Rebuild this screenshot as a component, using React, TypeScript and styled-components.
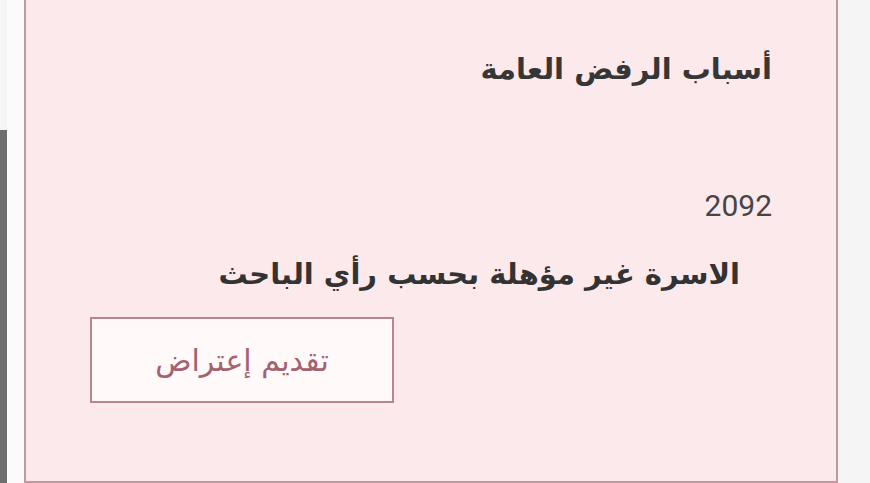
import styled, { createGlobalStyle } from 'styled-components';

const GlobalStyle = createGlobalStyle`
  html, body {
    margin: 0;
    padding: 0;
    background: #f6f5f5;
    overflow: hidden;
  }
`;

const Page = styled.div`
  display: flex;
  height: 483px;
  width: 870px;
  font-family: "DejaVu Sans", "Noto Sans", sans-serif;
`;

const SideRail = styled.div`
  width: 7px;
  margin-top: 130px;
  background: #6e6e6e;
`;

const Gutter = styled.div`
  width: 17px;
  background: #fbfbfb;
`;

const Panel = styled.section`
  width: 810px;
  height: 481px;
  direction: rtl;
  background: #fce9ec;
  border: 2px solid #c2979f;
  border-top: none;
  display: flex;
  flex-direction: column;
  align-items: flex-start;
  box-sizing: content-box;
`;

const Heading = styled.h2<{ $inset: number; $top: number }>`
  margin: ${({ $top }) => $top}px ${({ $inset }) => $inset}px 0 0;
  font-size: 29px;
  font-weight: bold;
  color: #363636;
  line-height: 40px;
`;

const Code = styled.div<{ $inset: number; $top: number }>`
  margin: ${({ $top }) => $top}px ${({ $inset }) => $inset}px 0 0;
  font-family: "Roboto", "DejaVu Sans", sans-serif;
  font-size: 30px;
  color: #454545;
  line-height: 36px;
`;

const Reason = styled.p<{ $inset: number; $top: number }>`
  margin: ${({ $top }) => $top}px ${({ $inset }) => $inset}px 0 0;
  font-size: 29px;
  font-weight: bold;
  color: #333333;
  line-height: 40px;
`;

const ObjectionButton = styled.button`
  align-self: flex-end;
  margin: 23px 0 0 64px;
  width: 304px;
  height: 86px;
  background: #fff9f9;
  border: 2px solid #b6858f;
  color: #a4626f;
  font-family: "DejaVu Sans", sans-serif;
  font-size: 30px;
  direction: rtl;
  cursor: pointer;
`;

export default function App() {
  return (
    <>
      <GlobalStyle />
      <Page>
        <SideRail />
        <Gutter />
        <Panel>
          <Heading $inset={64} $top={49}>أسباب الرفض العامة</Heading>
          <Code $inset={64} $top={99}>2092</Code>
          <Reason $inset={96} $top={30}>الاسرة غير مؤهلة بحسب رأي الباحث</Reason>
          <ObjectionButton>تقديم إعتراض</ObjectionButton>
        </Panel>
      </Page>
    </>
  );
}
